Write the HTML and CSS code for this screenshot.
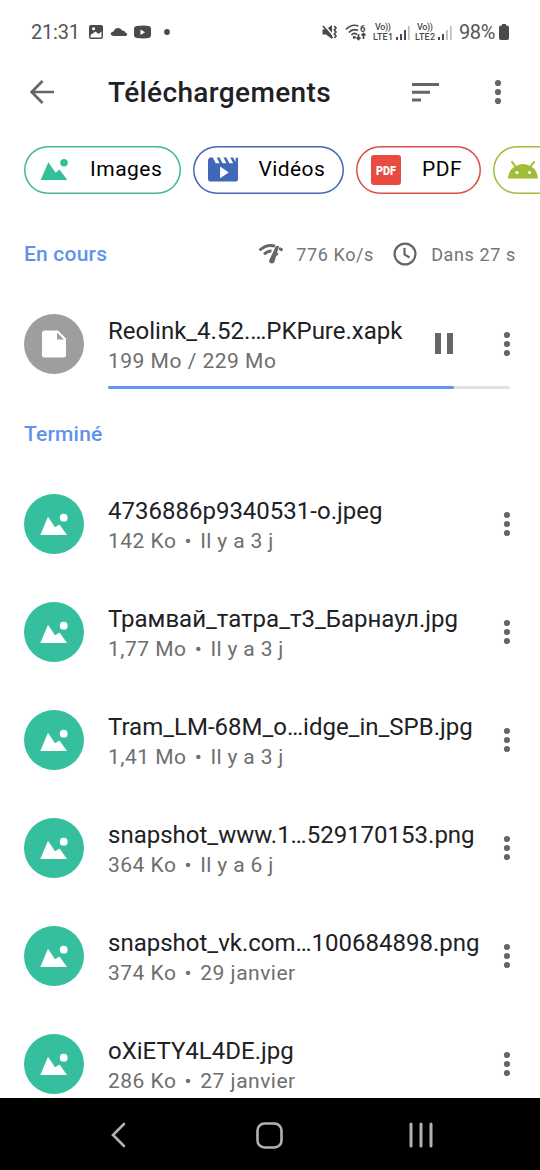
FILE: index.html
```html
<!DOCTYPE html>
<html lang="fr">
<head>
<meta charset="utf-8">
<title>Téléchargements</title>
<link rel="stylesheet" href="styles.css">
</head>
<body>
<svg class="defs" aria-hidden="true">
  <symbol id="landscape" viewBox="0 0 28 22"><path d="M.7 21 8.3 3.300 15.700 13.700 19.500 10.600 27.300 21z"/><circle cx="24" cy="3.800" r="3.800"/></symbol>
  <symbol id="round-picture" viewBox="0 0 60 60"><path d="M16.300 41 24 22.800 31 33.300 35.500 30.500 43 41z"/><circle cx="39.700" cy="23.700" r="3.900"/></symbol>
  <symbol id="dots" viewBox="0 0 8 26"><circle cx="4" cy="4" r="3.100"/><circle cx="4" cy="13" r="3.100"/><circle cx="4" cy="22" r="3.100"/></symbol>
</svg>
<div class="screen">
  <div class="status">
    <span class="clock">21:31</span>
    <svg class="st-left" viewBox="0 0 86 20"><path fill-rule="evenodd" d="M2 3h10q2 0 2 2v10q0 2-2 2H2q-2 0-2-2V5q0-2 2-2zM1.500 13v2.500h11V9.500L9.500 12 6.500 9.500zM4.500 5.200a1.600 1.600 0 1 0 .1 0z"/><path d="M25 14c-4 0-4.500-4-.3-4.500 1-4.500 7-4.500 8.300-1 2.500 0 3.300 1.500 3.500 2.300 2.500.3 2 3.200 0 3.200z"/><path fill-rule="evenodd" d="M48 4q7-.8 12 0 2 .5 2 2.500v6.500q0 2.500-2 3-6 .8-12 0-3-.5-3-3V6.500q0-2 3-2.500zM51.500 7.500v5.400l4.600-2.700z"/><circle cx="78" cy="10" r="2.900"/></svg>
    <svg class="mute" viewBox="0 0 16 16"><path d="M.5 5.500h3.500l6-4.500v14l-6-4.500H.5z"/><path class="cut" d="M2.500 1 11.500 12"/><path class="line" d="M1 2 10.500 14M12.300 2l1.700 2-1.700 2L14 8l-1.700 2 1.700 2-1.700 2"/></svg>
    <svg class="wifi" viewBox="0 0 22 17"><path class="line" d="M1 5.500Q6.500-.5 13.500 2M3.800 8.500Q8 4 13 6.500M6.500 11Q9 8 12 10.500M13.500 10v5.500m-2-2 2 2 2-2M18.500 15v-5.500m-2 2 2-2 2 2"/><circle cx="9.300" cy="13.300" r="1.500"/><text x="15" y="7.500" class="six">6</text></svg>
    <svg class="volte" viewBox="0 0 22 22"><text x="2" y="9.300" textLength="16">Vo))</text><text x="0" y="18.800" textLength="20">LTE1</text></svg>
    <svg class="signal" viewBox="0 0 14 15"><path d="M0 12h2v3H0zM4 9h2v6H4zM8 5h2v10H8z"/><path class="faint" d="M12 1h1.600v14H12z"/></svg>
    <svg class="volte second" viewBox="0 0 22 22"><text x="2" y="9.300" textLength="16">Vo))</text><text x="0" y="18.800" textLength="20">LTE2</text></svg>
    <svg class="signal" viewBox="0 0 14 15"><path d="M0 12h2v3H0zM4 9h2v6H4z"/><path class="faint" d="M8 5h1.800v10H8zM12 1h1.600v14H12z"/></svg>
    <span class="percent">98%</span>
    <svg class="battery" viewBox="0 0 10 16"><path d="M3 0h4v1.500h1.200Q10 1.500 10 3.500v10.500Q10 16 8 16h-6Q0 16 0 14V3.500q0-2 1.800-2H3z"/></svg>
  </div>
  <header class="bar">
    <svg class="back" viewBox="0 0 24 24"><path d="M24 12H2M12.500 1 1.700 12l10.800 11"/></svg>
    <h1>Téléchargements</h1>
    <svg class="sort" viewBox="0 0 27 19"><path d="M0 0h27v3H0zM0 7.800h18v3H0zM0 15.500h9v3H0z"/></svg>
    <svg class="dots"><use href="#dots"/></svg>
  </header>
  <nav class="chips">
    <div class="chip images"><svg class="landscape"><use href="#landscape"/></svg><span>Images</span></div>
    <div class="chip videos"><svg class="film" viewBox="0 0 31 25"><path fill-rule="evenodd" d="M2 0h3l3 6h4L9 0h3l3 6h4l-3-6h3l3 6h4l-3-6h3l2.500 5V.3H31V22q0 3-3 3H3q-3 0-3-3V3q0-2 2-3zM12.500 9.500v12L21.500 15.500z"/></svg><span>Vidéos</span></div>
    <div class="chip pdf"><svg class="pdf-icon" viewBox="0 0 30 30"><rect width="30" height="30" rx="3"/><text x="5" y="19.500" textLength="20" lengthAdjust="spacingAndGlyphs">PDF</text></svg><span>PDF</span></div>
    <div class="chip android"><svg class="robot" viewBox="0 0 30 19"><path d="M0 18.500C.5 12 3.500 8 8 6Q15 2 22 6c4.500 2 7.500 6 8 12.500z"/><path class="antenna" d="M8 7 3.500 1.300M22 7l4.500-5.700"/><circle class="eye" cx="9" cy="12.500" r="1.600"/><circle class="eye" cx="21.500" cy="12.500" r="1.600"/></svg></div>
  </nav>
  <section>
    <div class="heading active">
      <h2>En cours</h2>
      <svg class="speed" viewBox="0 0 26 20"><path class="arc" d="M1.500 6.300Q9-.3 17 2.200M6 10.300Q10 6.700 13.500 7M21 4.300l3.500 2M16.800 9l3 1.900"/><path d="M18 2h3l-4.500 15.800c-1.300 3-6.200 1.600-5.300-1.500z"/></svg>
      <span class="rate">776 Ko/s</span>
      <svg class="time" viewBox="0 0 24 24"><circle cx="12" cy="12" r="10.400"/><path d="M11.500 6v6.500l5 3"/></svg>
      <span class="left">Dans 27 s</span>
    </div>
    <div class="row current">
      <div class="avatar file"><svg viewBox="0 0 60 60"><path fill-rule="evenodd" d="M21 16.500h13l8 8V41q0 2.500-2.500 2.500H20.500Q18 43.500 18 41V19.500q0-3 3-3zM33 18.500V25.500h7z"/></svg></div>
      <div class="info"><div class="name">Reolink_4.52.…PKPure.xapk</div><div class="meta">199 Mo / 229 Mo</div></div>
      <svg class="pause" viewBox="0 0 18 21"><path d="M0 0h6v21H0zM12 0h6v21h-6z"/></svg>
      <svg class="dots"><use href="#dots"/></svg>
    </div>
    <div class="progress"><div class="done"></div></div>
  </section>
  <section class="finished">
    <div class="heading"><h2>Terminé</h2></div>
    <div class="row"><div class="avatar"><svg><use href="#round-picture"/></svg></div><div class="info"><div class="name">4736886p9340531-o.jpeg</div><div class="meta">142 Ko <i>•</i> <span class="ago">Il y a 3 j</span></div></div><svg class="dots"><use href="#dots"/></svg></div>
    <div class="row"><div class="avatar"><svg><use href="#round-picture"/></svg></div><div class="info"><div class="name">Трамвай_татра_т3_Барнаул.jpg</div><div class="meta">1,77 Mo <i>•</i> <span class="ago">Il y a 3 j</span></div></div><svg class="dots"><use href="#dots"/></svg></div>
    <div class="row"><div class="avatar"><svg><use href="#round-picture"/></svg></div><div class="info"><div class="name">Tram_LM-68M_o…idge_in_SPB.jpg</div><div class="meta">1,41 Mo <i>•</i> <span class="ago">Il y a 3 j</span></div></div><svg class="dots"><use href="#dots"/></svg></div>
    <div class="row"><div class="avatar"><svg><use href="#round-picture"/></svg></div><div class="info"><div class="name">snapshot_www.1…529170153.png</div><div class="meta">364 Ko <i>•</i> <span class="ago">Il y a 6 j</span></div></div><svg class="dots"><use href="#dots"/></svg></div>
    <div class="row"><div class="avatar"><svg><use href="#round-picture"/></svg></div><div class="info"><div class="name">snapshot_vk.com…100684898.png</div><div class="meta">374 Ko <i>•</i> 29 janvier</div></div><svg class="dots"><use href="#dots"/></svg></div>
    <div class="row"><div class="avatar"><svg><use href="#round-picture"/></svg></div><div class="info"><div class="name">oXiETY4L4DE.jpg</div><div class="meta">286 Ko <i>•</i> 27 janvier</div></div><svg class="dots"><use href="#dots"/></svg></div>
  </section>
  <footer class="navbar">
    <svg class="nav-back" viewBox="0 0 15 26"><path d="M13 2 2 13l11 11"/></svg>
    <svg class="nav-home" viewBox="0 0 27 27"><rect x="1.500" y="1.500" width="24" height="24" rx="7"/></svg>
    <svg class="nav-recent" viewBox="0 0 24 26"><path d="M2 2v22M12 2v22M22 2v22"/></svg>
  </footer>
</div>
</body>
</html>
```
FILE: styles.css
```css
* { box-sizing: border-box; }
body { margin: 0; font-family: Roboto, sans-serif; background: #fff; color: #202124; }
h1, h2 { margin: 0; font-weight: 500; }
svg { display: block; flex: none; fill: #666; }
.defs { position: absolute; width: 0; height: 0; }
.screen { width: 540px; height: 1170px; overflow: hidden; display: flex; flex-direction: column; }

.status { height: 64px; flex: none; display: flex; align-items: center; padding-left: 31px; color: #555; white-space: nowrap; }
.status svg { fill: #4a4a4a; }
.clock { width: 58px; font-size: 20px; letter-spacing: -.2px; }
.st-left { width: 86px; height: 20px; }
.status .line { fill: none; stroke: #4a4a4a; stroke-width: 1.7; }
.status .cut { fill: none; stroke: #fff; stroke-width: 1.5; }
.mute { width: 16px; height: 16px; margin-left: 147px; }
.wifi { width: 22px; height: 17px; margin-left: 7px; }
.six { font-size: 9.5px; font-weight: 700; }
.volte { width: 22px; height: 22px; margin-left: 6px; font-size: 9px; font-weight: 500; }
.signal { width: 14px; height: 15px; margin-left: 1px; }
.volte.second { margin-left: 5px; }
.status .faint { fill: #bbb; }
.percent { width: 37px; margin-left: 7px; font-size: 20px; letter-spacing: -.4px; }
.battery { width: 10px; height: 16px; margin-left: 3px; }

.bar { height: 56px; flex: none; display: flex; align-items: center; padding-left: 30px; }
.back { width: 24px; height: 24px; margin-right: 54px; }
.back path { fill: none; stroke: #666; stroke-width: 2.7; }
.bar h1 { width: 304px; font-size: 28px; letter-spacing: .38px; padding-top: 1px; }
.sort { width: 27px; height: 19px; }
.dots { width: 8px; height: 26px; }
.bar .dots { margin-left: 55px; }

.chips { flex: none; margin-top: 25px; height: 49px; padding-left: 24px; display: flex; gap: 12px; }
.chip { flex: none; height: 48px; margin-top: .5px; box-shadow: inset 0 0 0 1.5px var(--edge); border-radius: 24px; display: flex; align-items: center; font-size: 21px; letter-spacing: .5px; padding-left: 16px; }
.chip span { color: #000; margin-top: -1px; }
.images { width: 156.5px; --edge: #45b894; }
.landscape { width: 28px; height: 22px; fill: #33bf9c; margin-right: 22px; }
.videos { width: 151.5px; --edge: #4269b2; padding-left: 15px; }
.film { width: 30px; height: 25px; fill: #4067b8; margin-right: 21px; }
.videos span { letter-spacing: .4px; }
.pdf { width: 124.5px; --edge: #da5049; padding-left: 15px; }
.pdf-icon { width: 30px; height: 30px; fill: #e84b40; margin-right: 21px; }
.pdf-icon text { fill: #fff; font-size: 12.5px; font-weight: 900; letter-spacing: 0; }
.android { width: 150px; --edge: #a0bd3d; padding-left: 15px; }
.robot { width: 30px; height: 19px; fill: #9fbd36; }
.antenna { stroke: #9fbd36; stroke-width: 2; }
.eye { fill: #fff; }

.heading { height: 72px; display: flex; align-items: center; padding: 0 24px; }
.active { margin-top: 24px; }
h2 { font-size: 21px; letter-spacing: .2px; color: #5f93eb; padding-top: 1px; }
.heading.active h2 { width: 235px; padding-top: 0; }
.speed { width: 26px; height: 20px; }
.speed .arc { fill: none; stroke: #666; stroke-width: 2.8; }
.heading span { font-size: 18px; letter-spacing: .62px; color: #757575; white-space: nowrap; }
.rate { width: 97px; margin-left: 12.5px; }
.time { width: 24px; height: 24px; margin-left: .5px; }
.time circle, .time path { fill: none; stroke: #666; stroke-width: 2.2; }
.left { margin-left: 14px; }

.row { height: 108px; display: flex; align-items: center; padding: 0 29px 0 24px; }
.current { height: 95px; padding-top: 12px; }
.avatar { width: 60px; height: 60px; border-radius: 50%; background: #36bf9f; flex: none; }
.avatar.file { background: #9e9e9e; }
.avatar svg { width: 60px; height: 60px; fill: #fff; }
.info { flex: 1; min-width: 0; margin-left: 24px; white-space: nowrap; padding-top: 2px; }
.name { font-size: 24px; line-height: 30px; margin-top: 3px; }
.meta { font-size: 21px; line-height: 30px; letter-spacing: .5px; color: #6e6e6e; }
.meta i { font-style: normal; margin: 0 2.4px; }
.ago { letter-spacing: .35px; }
.current .info { padding-top: 1px; }
.pause { width: 18px; height: 21px; margin-right: 50px; }
.progress { width: 402px; height: 3px; margin: .5px 0 0 108px; background: #e2e2e2; border-radius: 2px; }
.done { width: 346px; height: 3px; background: #6495ed; border-radius: 2px; }
.finished { padding-top: 9px; }
.finished .info { padding-top: 1px; }

.navbar { position: absolute; left: 0; top: 1098px; width: 540px; height: 72px; background: #000; display: flex; align-items: center; padding: 2px 0 0 110.5px; }
.navbar svg { fill: none; stroke: #b2b2b2; stroke-width: 2.6; stroke-linecap: round; }
.nav-back { width: 15px; height: 26px; }
.nav-home { width: 27px; height: 27px; margin-left: 130.5px; }
.nav-recent { width: 24px; height: 26px; margin-left: 126px; }
.nav-recent path { stroke-width: 3; }
```
